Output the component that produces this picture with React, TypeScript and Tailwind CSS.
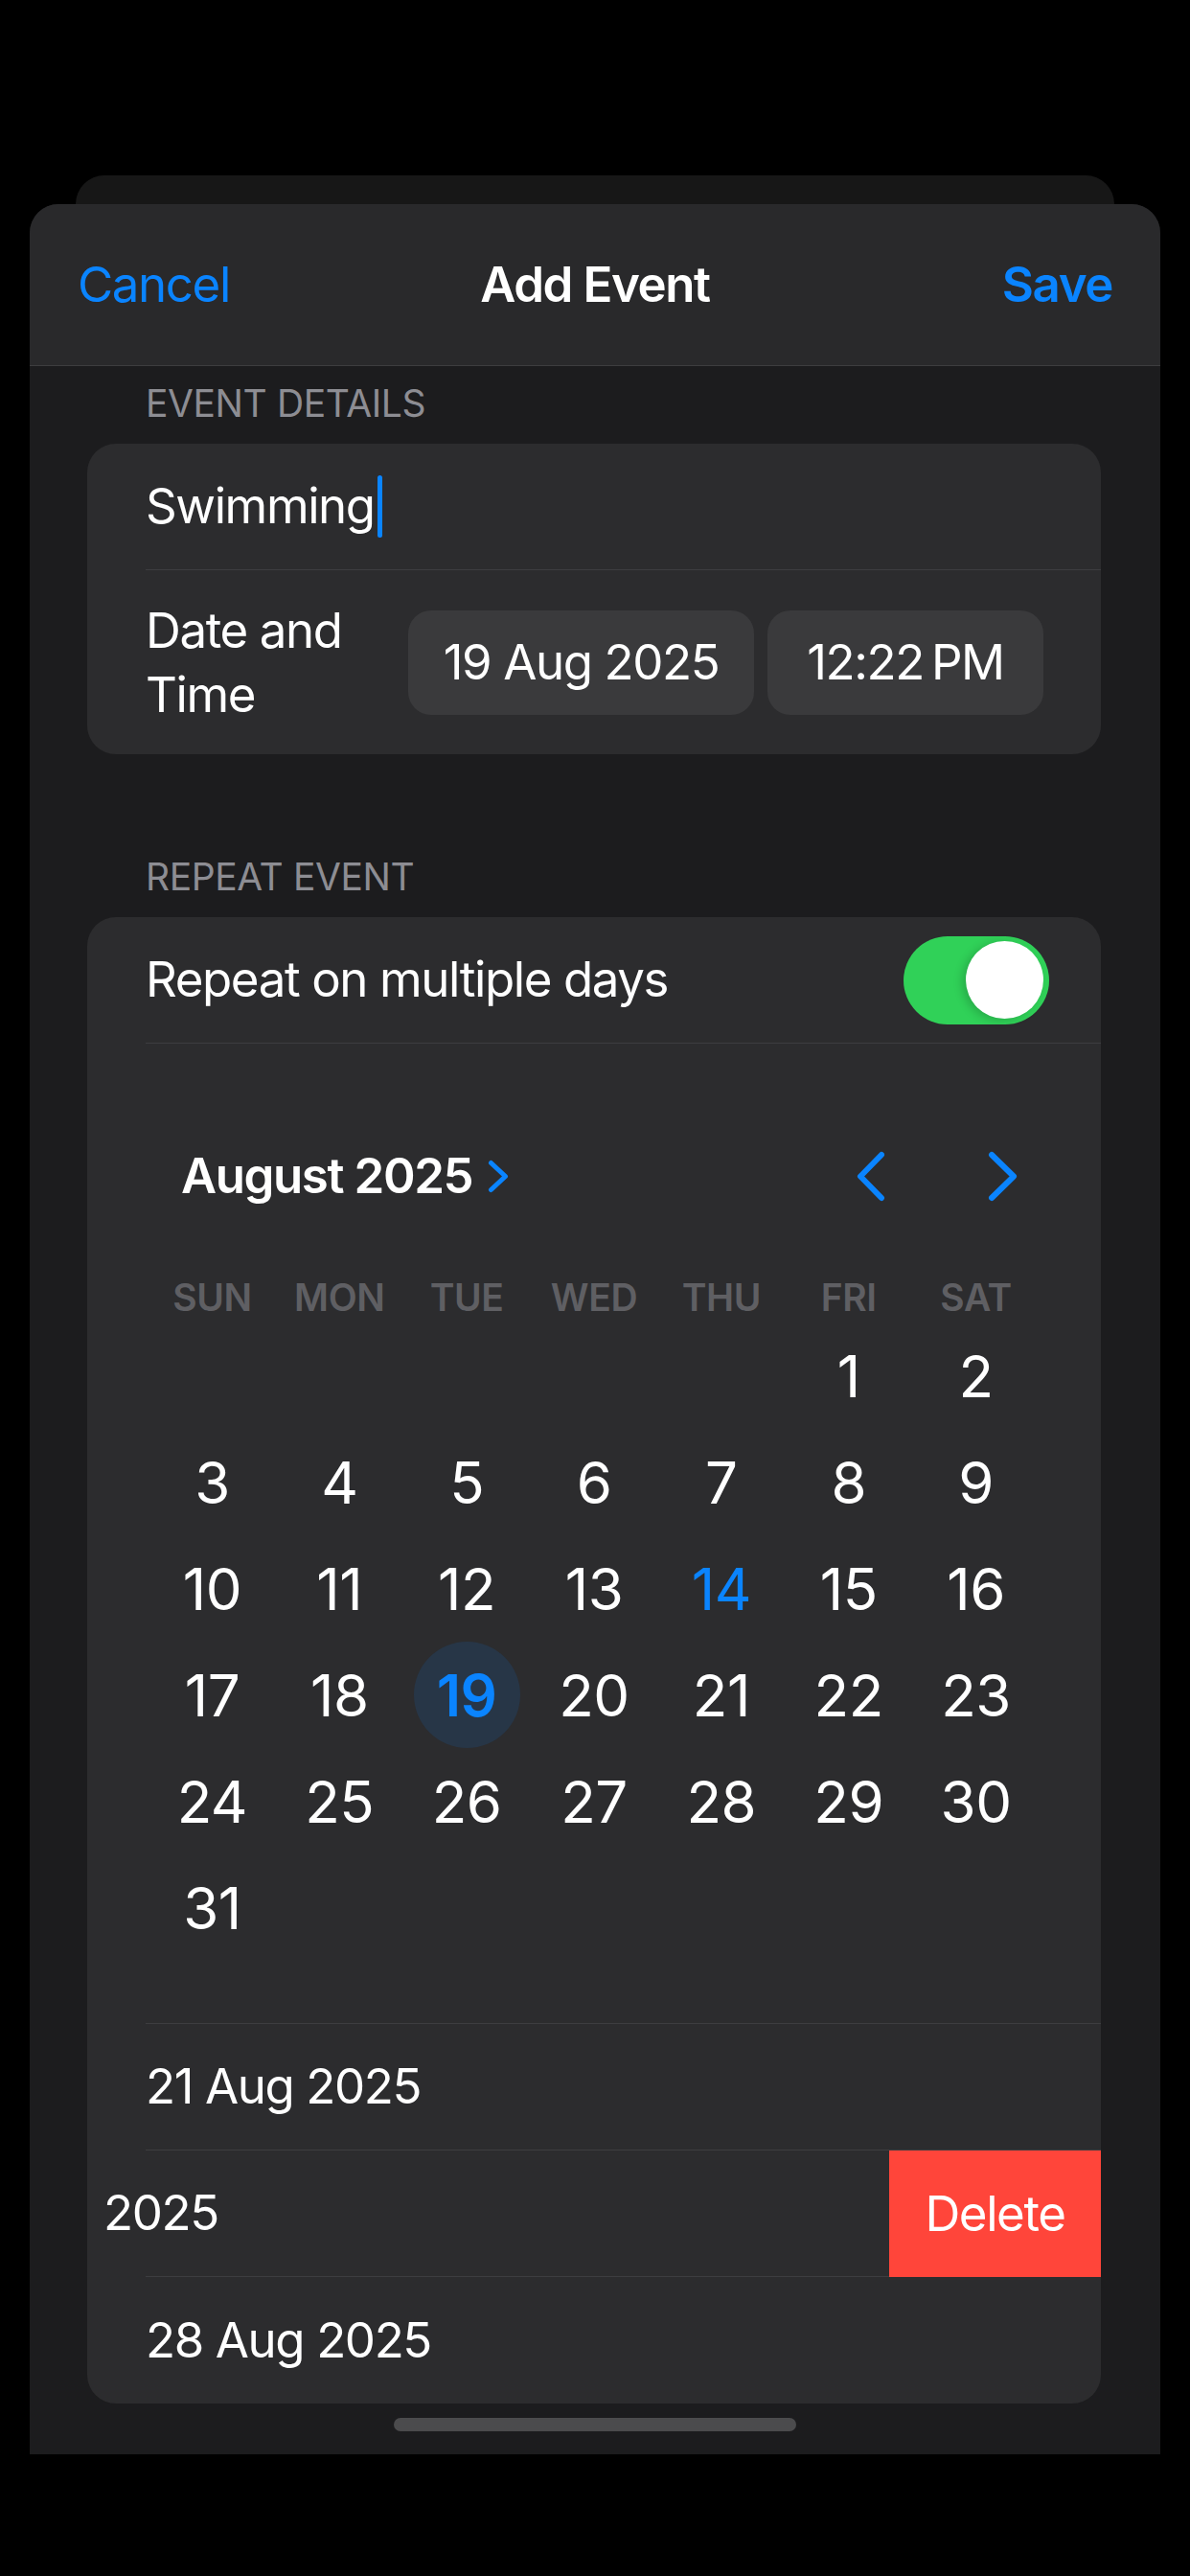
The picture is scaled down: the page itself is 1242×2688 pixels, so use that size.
import React from "react";

const days: (number | null)[] = [
  null, null, null, null, null, 1, 2,
  3, 4, 5, 6, 7, 8, 9,
  10, 11, 12, 13, 14, 15, 16,
  17, 18, 19, 20, 21, 22, 23,
  24, 25, 26, 27, 28, 29, 30,
  31, null, null, null, null, null, null,
];

const weekdays = ["SUN", "MON", "TUE", "WED", "THU", "FRI", "SAT"];

function ChevronLeft() {
  return (
    <svg width="31" height="53" viewBox="0 0 31 53" fill="none">
      <path d="M27 4 L5 26.5 L27 49" stroke="#0a84ff" strokeWidth="6" strokeLinecap="round" strokeLinejoin="round" />
    </svg>
  );
}

function ChevronRight({ w = 31, h = 53, sw = 6 }: { w?: number; h?: number; sw?: number }) {
  return (
    <svg width={w} height={h} viewBox={`0 0 ${w} ${h}`} fill="none">
      <path
        d={`M${sw / 2 + 1} ${sw / 2 + 1} L${w - sw / 2 - 1} ${h / 2} L${sw / 2 + 1} ${h - sw / 2 - 1}`}
        stroke="#0a84ff"
        strokeWidth={sw}
        strokeLinecap="round"
        strokeLinejoin="round"
      />
    </svg>
  );
}

export default function App() {
  return (
    <div className="min-h-[2688px] bg-black pt-[183px] font-['Inter','Liberation_Sans',sans-serif] tracking-[-1.4px] text-white">
      {/* stacked sheet behind */}
      <div className="mx-[79px] h-[60px] rounded-t-[30px] bg-[#171717]" />

      {/* main sheet */}
      <div className="relative -mt-[30px] ml-[31px] mr-[31px] flex h-[2348px] flex-col overflow-hidden rounded-t-[30px] bg-[#1c1c1e]">
        {/* nav header */}
        <div className="flex h-[169px] shrink-0 items-center border-b border-[#3d3d3f] bg-[#29292b] px-[50px] text-[51px]">
          <span className="flex-1 text-[#0a84ff]">Cancel</span>
          <span className="font-semibold">Add Event</span>
          <span className="flex-1 text-right font-semibold text-[#0a84ff]">Save</span>
        </div>

        {/* EVENT DETAILS */}
        <div className="mt-[16px] h-[46px] pl-[121px] text-[39px] leading-[46px] tracking-[-0.01em] text-[#8d8d93]">
          EVENT DETAILS
        </div>
        <div className="ml-[60px] mr-[62px] mt-[19px] overflow-hidden rounded-[30px] bg-[#2c2c2e]">
          <div className="flex h-[131px] items-center pl-[61px] text-[51px]">
            <span>Swimming</span>
            <span className="ml-[3px] h-[65px] w-[5px] rounded-full bg-[#0a84ff]" />
          </div>
          <div className="ml-[61px] h-px bg-[#3d3d40]" />
          <div className="flex h-[192px] items-center pl-[61px] pr-[60px]">
            <div className="text-[51px] leading-[67px]">
              Date and
              <br />
              Time
            </div>
            <div className="ml-auto flex gap-[14px]">
              <div className="flex h-[109px] w-[361px] items-center justify-center rounded-[24px] bg-[#3a3a3c] text-[51px]">
                19 Aug 2025
              </div>
              <div className="flex h-[109px] w-[288px] items-center justify-center rounded-[24px] bg-[#3a3a3c] text-[51px]">
                12:22{"\u202F"}PM
              </div>
            </div>
          </div>
        </div>

        {/* REPEAT EVENT */}
        <div className="mt-[105px] h-[46px] pl-[121px] text-[39px] leading-[46px] tracking-[-0.01em] text-[#8d8d93]">
          REPEAT EVENT
        </div>
        <div className="ml-[60px] mr-[62px] mt-[19px] overflow-hidden rounded-[30px] bg-[#2c2c2e]">
          {/* toggle row */}
          <div className="flex h-[131px] items-center pl-[61px] pr-[54px]">
            <span className="text-[51px]">Repeat on multiple days</span>
            <div className="ml-auto flex h-[92px] w-[152px] items-center justify-end rounded-full bg-[#30d158] pr-[6px]">
              <div className="h-[81px] w-[81px] rounded-full bg-white shadow-[-4px_2px_10px_rgba(0,0,0,0.18)]" />
            </div>
          </div>
          <div className="ml-[61px] h-px bg-[#3d3d40]" />

          {/* calendar */}
          <div className="pb-[65px] pt-[108px]">
            <div className="flex h-[60px] items-center pl-[98px] pr-[87px]">
              <span className="text-[51px] font-semibold">August 2025</span>
              <span className="ml-[16px] flex items-center">
                <ChevronRight w={22} h={35} sw={5} />
              </span>
              <div className="ml-auto flex items-center gap-[107px]">
                <ChevronLeft />
                <ChevronRight />
              </div>
            </div>
            <div className="mt-[74px] grid h-[46px] grid-cols-7 px-[64px] text-center text-[39px] font-semibold leading-[46px] tracking-[-0.01em] text-[#5f5f63]">
              {weekdays.map((d) => (
                <span key={d}>{d}</span>
              ))}
            </div>
            <div className="mt-[3px] grid grid-cols-7 px-[64px] tracking-[-0.03em]">
              {days.map((d, i) => (
                <div key={i} className="flex h-[111px] items-center justify-center">
                  {d === 19 ? (
                    <div className="flex h-[111px] w-[111px] items-center justify-center rounded-full bg-[#273647] text-[60px] font-semibold text-[#0a84ff]">
                      19
                    </div>
                  ) : d === 14 ? (
                    <span className="text-[60px] text-[#0a84ff]">14</span>
                  ) : d ? (
                    <span className="text-[60px]">{d}</span>
                  ) : null}
                </div>
              ))}
            </div>
          </div>
          <div className="ml-[61px] h-px bg-[#3d3d40]" />

          {/* selected dates list */}
          <div className="flex h-[131px] items-center pl-[61px] text-[51px]">21 Aug 2025</div>
          <div className="ml-[61px] h-px bg-[#3d3d40]" />
          <div className="flex h-[132px]">
            <div className="flex min-w-0 flex-1 flex-col">
              <div className="flex h-[131px] items-center pl-[17px] text-[51px]">2025</div>
              <div className="ml-[61px] h-px bg-[#3d3d40]" />
            </div>
            <div className="flex w-[221px] items-center justify-center bg-[#ff453a] text-[51px]">Delete</div>
          </div>
          <div className="flex h-[132px] items-center pl-[61px] text-[51px]">28 Aug 2025</div>
        </div>

        {/* home indicator */}
        <div className="mx-auto mt-[15px] h-[14px] w-[420px] rounded-full bg-[#4b4b4d]" />
      </div>
    </div>
  );
}
